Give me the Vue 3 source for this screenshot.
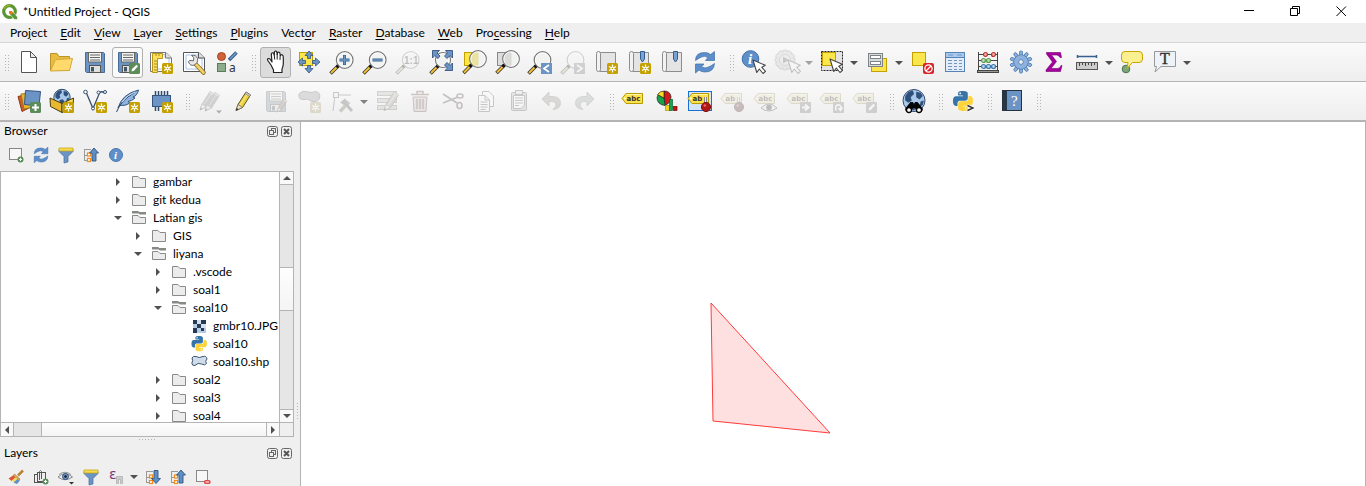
<script setup>
const star = (x = 14, y = 13) =>
  `<rect x="${x}" y="${y}" width="11" height="11" rx="1.5" fill="#c4a000"/><g transform="translate(${x + 5.5} ${y + 5.5})" stroke="#fff" stroke-width="1.3"><path d="M0-4V4M-3.5-2L3.5 2M-3.5 2L3.5-2"/><circle r="1.8" fill="#fff" stroke="none"/><circle r="0.8" fill="#c4a000" stroke="none"/></g>`

const stick = (x, y) =>
  `<path d="M${x} ${y}l-7.500 7.500" stroke="#333" stroke-width="3.600"/><path d="M${x - 1.5} ${y + 1.5}l-5.500 5.500" stroke="#f5c030" stroke-width="2"/><circle cx="${x}" cy="${y}" r="1.800" fill="#111"/>`

const lens = (x, y, r = 8.3) =>
  `<circle cx="${x}" cy="${y}" r="${r}" fill="#f0f2f0" fill-opacity=".85" stroke="#777" stroke-width="1.2"/><circle cx="${x}" cy="${y}" r="${r - 1.2}" fill="none" stroke="#fff" stroke-width="1" opacity=".8"/>`

const cursor = (x, y) =>
  `<path transform="translate(${x} ${y})" d="M0 0L3.800 12.500L6.300 9L10 13.500L12.500 11.300L8.800 7.300L12.300 5.300Z" fill="#fff" stroke="#444" stroke-width="1.1" stroke-linejoin="round"/>`

const floppy =
  '<path d="M3.500 2.500H21.500L22.500 3.500V22.500H4.500L3.500 21.500Z" fill="#6b94c4" stroke="#4a6c93"/><rect x="6.500" y="2.500" width="13" height="9.500" fill="#f3f3f0" stroke="#666"/><path d="M8 5h10M8 7.500h10M8 10h10" stroke="#666"/><rect x="7.500" y="15.500" width="11" height="7" fill="#dfe1df" stroke="#555"/><rect x="9" y="17" width="3" height="4.500" fill="#456"/>'

const mapSheet =
  '<path d="M5.500 2.500H22.500V21.500H7L4.500 19Z" fill="#e4e4e4" stroke="#8d8d8d"/><path d="M3.500 3.500Q3.500 1.500 5.500 1.500T7.500 3.500V19.500Q7.500 21.500 5.500 21.500T3.500 19.500Z" fill="#f2f2f2" stroke="#8d8d8d"/>'

const ribbon = (x) => `<path d="M${x} 1.500h4v7.500l-2 3-2-3Z" fill="#7ba2d2" stroke="#315d91"/>`

const tag = (label) =>
  `<path d="M1 9.500L5 4.500H21.500V14.500H5Z" fill="#fbe14b" stroke="#b89b00" stroke-linejoin="round"/><path d="M5.500 5.500h15" stroke="#fff6a8"/><circle cx="4" cy="9.500" r="1" fill="#fff"/><text x="5.500" y="12" font-family="DejaVu Sans, sans-serif" font-size="7" font-weight="700" fill="#333">${label}</text>`

const pin = '<path d="M18.500 8v8" stroke="#777" stroke-width="3"/><path d="M18.500 8v8" stroke="#eee" stroke-width="1.300"/><circle cx="19" cy="18" r="4.600" fill="#b01717" stroke="#7c1010"/><circle cx="17.800" cy="16.500" r="1.300" fill="#e66"/>'

const badge = (inner) => `<rect x="14" y="13" width="11" height="11" rx="1" fill="#777"/>${inner}`

const pencil = (x, y, c = '#f0d23c', line = '#5d5420') =>
  `<g transform="translate(${x} ${y})"><path d="M1 20L3 14L11 1.500L15.500 4.500L7.500 17Z" fill="${c}" stroke="${line}" stroke-linejoin="round"/><path d="M5 14.500L12.500 3.500" stroke="#fff" stroke-opacity=".5" stroke-width="1"/><path d="M11 1.500L15.500 4.500L14.500 6L10 3Z" fill="#ccc" stroke="#777" stroke-width=".6"/><path d="M1 20L3 14L7.500 17Z" fill="#eee0c0" stroke="#666" stroke-width=".7"/><path d="M1 20L1.700 17.500L3.500 18.700Z" fill="#222"/></g>`

const pythonBody =
  '<path fill="#3775a9" d="M14.25.18l.9.2.73.26.59.3.45.32.34.34.25.34.16.33.1.3.04.26.02.2-.01.13V8.5l-.05.63-.13.55-.21.46-.26.38-.3.31-.33.25-.35.19-.35.14-.33.1-.3.07-.26.04-.21.02H8.77l-.69.05-.59.14-.5.22-.41.27-.33.32-.27.35-.2.36-.15.37-.1.35-.07.32-.04.27-.02.21v3.06H3.17l-.21-.03-.28-.07-.32-.12-.35-.18-.36-.26-.36-.36-.35-.46-.32-.59-.28-.73-.21-.88-.14-1.05-.05-1.23.06-1.22.16-1.04.24-.87.32-.71.36-.57.4-.44.42-.33.42-.24.4-.16.36-.1.32-.05.24-.01h.16l.06.01h8.16v-.83H6.18l-.01-2.75-.02-.37.05-.34.11-.31.17-.28.25-.26.31-.23.38-.2.44-.18.51-.15.58-.12.64-.1.71-.06.77-.04.84-.02 1.27.05zm-6.3 1.98l-.23.33-.08.41.08.41.23.34.33.22.41.09.41-.09.33-.22.23-.34.08-.41-.08-.41-.23-.33-.33-.22-.41-.09-.41.09z"/><path fill="#ffd43b" d="M21.04 6.11l.28.06.32.12.35.18.36.27.36.35.35.47.32.59.28.73.21.88.14 1.04.05 1.23-.06 1.23-.16 1.04-.24.86-.32.71-.36.57-.4.45-.42.33-.42.24-.4.16-.36.09-.32.05-.24.02-.16-.01h-8.22v.82h5.84l.01 2.76.02.36-.05.34-.11.31-.17.29-.25.25-.31.24-.38.2-.44.17-.51.15-.58.13-.64.09-.71.07-.77.04-.84.01-1.27-.04-1.07-.14-.9-.2-.73-.25-.59-.3-.45-.33-.34-.34-.25-.34-.16-.33-.1-.3-.04-.25-.02-.2.01-.13v-5.34l.05-.64.13-.54.21-.46.26-.38.3-.32.33-.24.35-.2.35-.14.33-.1.3-.06.26-.04.21-.02.13-.01h5.84l.69-.05.59-.14.5-.21.41-.28.33-.32.27-.35.2-.36.15-.36.1-.35.07-.32.04-.28.02-.21V6.07h2.09l.14.01zm-6.47 14.25l-.23.33-.08.41.08.41.23.33.33.23.41.08.41-.08.33-.23.23-.33.08-.41-.08-.41-.23-.33-.33-.23-.41-.08-.41.08z"/>'

const teeth = (n, r, w, h) =>
  Array.from({ length: n }, (_, i) => `<rect x="${-w / 2}" y="${-r}" width="${w}" height="${h}" rx="1" transform="rotate(${(i * 360) / n})"/>`).join('')

const refreshPaths =
  '<path d="M3.500 10.500Q3.500 2.500 12.500 2.500Q16.500 2.500 18.500 4.500L22.500 1.500V10.500H13.500L16 7.500Q12.500 5.500 9.500 7Q7 8 3.500 10.500Z" fill="#5b8ecb" stroke="#3f6ea8" stroke-width=".7"/><path d="M22.500 13.500Q22 22 13 22Q9 22 7 20L3.500 23V14H12L9.500 16.800Q13 19 16.500 17Q19 16 22.500 13.500Z" fill="#5b8ecb" stroke="#3f6ea8" stroke-width=".7"/>'

const globe = (x, y, r) =>
  `<circle cx="${x}" cy="${y}" r="${r}" fill="#a9c8ea" stroke="#2f4a6b"/><path transform="translate(${x} ${y}) scale(${r / 10})" d="M-8-4L-5-8L-1-9L0-6L-3-3L-2 0L-5 2L-8 0ZM2-8L6-7L8-4L5-1L2-3ZM-3 3L1 2L3 5L0 9L-3 7ZM6 1L9 0L8 4L5 6Z" fill="#2e507b"/>`

const icons = {
  new: '<path d="M5.500 1.500H14.500L20.500 7.500V22.500H5.500Z" fill="#fff" stroke="#555"/><path d="M14.500 1.500V7.500H20.500Z" fill="#eee" stroke="#555" stroke-linejoin="round"/>',
  open: '<path d="M1.500 20.500V3.500H8L10 6.500H20.500V20.500Z" fill="#e8bd3d" stroke="#b9942c"/><path d="M1.500 21L6 10.500Q6.500 9.500 8 9.500L23.500 8.500L20.500 20.500Z" fill="#ffd96b" stroke="#d3a93a" stroke-linejoin="round"/>',
  save: floppy,
  saveAs: floppy + '<rect x="14" y="13" width="11" height="11" rx="1.500" fill="#5b8c5a"/><path d="M16.500 21.500L17 19L21.500 14.800L23 16.300L19 20.800Z" fill="#fff"/>',
  layout: '<path d="M2.500 2.500H18L23.500 8V21.500H2.500Z" fill="#fff" stroke="#777"/><path d="M5 4.500h12v3h4V19H5Z" fill="none" stroke="#aac4ea"/><path d="M17.500 2.500V8H23.500" fill="#ddd" stroke="#777"/><path d="M4.500 3.500H14.500V8.500H9.500V22.500H4.500Z" fill="#fbdf5b" stroke="#b8961b"/><path d="M6 11h3M6 14h3M6 17h3M6 20h3M8 4v2M11 4v2" stroke="#a98a1c"/>' + star(),
  manager: '<path d="M2.500 2.500H18L23.500 8V21.500H2.500Z" fill="#fff" stroke="#555"/><path d="M5 5h12v3h4V19H5Z" fill="none" stroke="#aac4ea"/><path d="M17.500 2.500V8H23.500" fill="#ddd" stroke="#555"/><path d="M14 13.500L22.500 22.500" stroke="#88702b" stroke-width="4.500" stroke-linecap="round"/><path d="M15 14.500L22.500 22.500" stroke="#f3cf68" stroke-width="2.800" stroke-linecap="round"/><path d="M9 10.500L12.500 10.800L12.800 7.500L10.500 5.500Q15 4.500 16.500 8.500Q17 11 16 12.500L13.500 15Q9 16.500 7.500 11.800Q8 10.500 9 10.500Z" fill="#e8e8e8" stroke="#666"/>',
  style: '<circle cx="7.500" cy="6.500" r="4" fill="#d0613a" stroke="#a8431f"/><path d="M15 10L22.500 2.500" stroke="#38608f" stroke-width="3.500"/><path d="M16 9L22.500 2.500" stroke="#739bc9" stroke-width="1.500"/><rect x="3.500" y="13.500" width="8" height="8" fill="#8dac8c" stroke="#5a7d59"/><text x="15" y="21.500" font-family="Noto Sans, sans-serif" font-size="12" fill="#333">a</text>',
  hand: '<path d="M8 15L4.800 10.500Q4 8.800 5.500 8.500Q7 8.300 8 10.500L9 12L8.300 4.500Q8.500 2.500 10 2.800Q11 3 11.200 5L11.500 1.800Q12.500.3 13.800 1.700L14.200 4.500Q14.300 2 15.800 2Q17.200 2.300 17.200 5L17.500 5.500Q18.300 4.200 19.500 5Q20.300 5.500 20.300 8V14Q20 17 19 19V22.500H10.500V20Z" fill="#fff" stroke="#222" stroke-width="1.200" stroke-linejoin="round"/><path d="M11.200 4.500L11.700 9.500M14.200 4V9.500M17.200 5L17 10" stroke="#222"/>',
  panSel: '<rect x="3.500" y="2.500" width="13" height="13" fill="#fbe64b" stroke="#c4a000"/><path d="M13 1L17 5.500H14.500V8.500H11.500V5.500H9ZM13 23L17 18.500H14.500V15.500H11.500V18.500H9ZM2 12L6.500 8V10.500H9.500V13.500H6.500V16ZM24 12L19.500 8V10.500H16.500V13.500H19.500V16Z" fill="#6b94c4" stroke="#345580" stroke-width=".8"/>',
  zoomIn: stick(9, 16) + lens(15.7, 10) + '<path d="M15.500 5V15M10.500 10H20.500" stroke="#38608f" stroke-width="3"/><path d="M15.500 5.500V14.500M11 10H20" stroke="#6b94c4" stroke-width="1.500"/>',
  zoomOut: stick(9, 16) + lens(15.7, 10) + '<path d="M10.500 10H20.500" stroke="#38608f" stroke-width="3"/><path d="M11 10H20" stroke="#6b94c4" stroke-width="1.500"/>',
  zoomNative: stick(9, 16) + lens(15.7, 10) + '<text x="9" y="13.500" font-family="Liberation Sans, sans-serif" font-size="10" font-weight="700" fill="#333">1:1</text>',
  zoomFull: stick(10, 16) + lens(15, 10, 7.5) + '<path d="M4.500.500H11.500L9 3L12 6L10 8.500L6.800 5.500L4.500 8ZM24.500.500V8L22 5.500L19 8.500L16.500 6L19.500 3L17.500.500ZM24.500 20.500H17L19.500 18L16.500 15L19 12.500L22 15.500L24.500 13Z" fill="#6b94c4" stroke="#345580" stroke-width=".9"/>',
  zoomSel: '<rect x="3.500" y="2.500" width="13" height="13" fill="#fbe64b" stroke="#c4a000"/>' + stick(10, 15.5) + lens(17, 9) + '<path d="M12 4Q15 1.500 17.500 3V15.500H12Q9 9 12 4Z" fill="#e5dc8b" opacity=".7"/>',
  zoomLayer: '<rect x="3.500" y="2.500" width="13" height="13" fill="#ddd" stroke="#888"/>' + stick(10, 15.5) + lens(17, 9) + '<path d="M12 4Q15 1.500 17.500 3V15.500H12Q9 9 12 4Z" fill="#d3d3ce" opacity=".7"/>',
  zoomLast: stick(9, 16) + lens(15.5, 10) + '<rect x="14" y="13" width="11" height="11" fill="#6b94c4"/><path d="M22 15L17 18.500L22 22" fill="none" stroke="#fff" stroke-width="1.800"/>',
  zoomNext: stick(9, 16) + lens(15.5, 10) + '<rect x="14" y="13" width="11" height="11" fill="#777"/><path d="M17 15L22 18.500L17 22" fill="none" stroke="#fff" stroke-width="1.800"/>',
  mapView: mapSheet + star(),
  newBookmark: mapSheet + ribbon(14.5) + star(),
  bookmark: mapSheet + ribbon(14.5),
  refresh: refreshPaths,
  identify: '<circle cx="9.500" cy="9" r="8.300" fill="#5f8fc9" stroke="#3f6ea8"/><text x="7" y="14" font-family="Liberation Serif, serif" font-size="15" font-weight="700" font-style="italic" fill="#fff">i</text>' + cursor(12, 10),
  action: '<g transform="translate(11 10)" fill="#ccc" stroke="#777" stroke-width=".8">' + teeth(12, 10, 4, 5) + '<circle r="8" stroke="none"/><circle r="5.500" fill="#ddd"/></g><path d="M9 6.500L15 10L9 13.500Z" fill="#555"/>' + cursor(14, 10),
  select: '<rect x="2.500" y="1.500" width="21" height="19" fill="#e4e4e4" stroke="#222" stroke-dasharray="2 1"/><rect x="3.500" y="2.500" width="13" height="13" fill="#fbe64b" stroke="#c4a000"/>' + cursor(11, 9),
  selectForm: '<rect x="7.500" y="8.500" width="15" height="13" fill="#fbe64b" stroke="#c4a000"/><rect x="4.500" y="3.500" width="14" height="13" fill="#d8dcdf" stroke="#7d8488"/><rect x="6.500" y="5.500" width="10" height="3" fill="#fff" stroke="#7d8488"/><rect x="6.500" y="11.500" width="10" height="3" fill="#fff" stroke="#7d8488"/>',
  deselect: '<rect x="3.500" y="2.500" width="13" height="13" fill="#fbe64b" stroke="#c4a000"/><rect x="14" y="13" width="11" height="11" rx="2" fill="#d8232a"/><circle cx="19.500" cy="18.500" r="3.600" fill="none" stroke="#fff" stroke-width="1.300"/><path d="M17 21L22 16" stroke="#fff" stroke-width="1.300"/>',
  table: '<rect x="3.500" y="2.500" width="19" height="19" fill="#e3ecf7" stroke="#5583b8"/><rect x="4" y="3" width="18" height="4" fill="#a9c9ef"/><path d="M3.500 7.500H22.500" stroke="#5583b8"/><path d="M6 5h5M15 5h5M6 10.500h4M12 10.500h3M17 10.500h3M6 13.500h4M12 13.500h3M17 13.500h3M6 16.500h4M12 16.500h3M17 16.500h3M6 19.500h4M12 19.500h3M17 19.500h3" stroke="#7196c2"/>',
  abacus: '<path d="M3.500 2V21M22.500 2V21M3.500 4.500H22.500M3.500 10.500H22.500M3.500 16.500H22.500" stroke="#444"/><rect x="2.500" y="20.500" width="21" height="2" fill="#999" stroke="#444"/><g stroke-width="1.200"><g fill="#f3aaa4" stroke="#c03028"><circle cx="10.500" cy="4.500" r="2"/><circle cx="18.500" cy="4.500" r="2"/></g><g fill="#bfe0b6" stroke="#5a9a50"><circle cx="8.500" cy="10.500" r="2"/><circle cx="13.500" cy="10.500" r="2"/></g><g fill="#b5d5f0" stroke="#3f79ac"><circle cx="8.500" cy="16.500" r="2"/><circle cx="13.500" cy="16.500" r="2"/><circle cx="18.500" cy="16.500" r="2"/></g></g>',
  gear: '<g transform="translate(13 12)" fill="#8db1de" stroke="#4a78ae" stroke-width=".8">' + teeth(10, 11, 3, 6) + '<circle r="7.200"/><circle r="6.500" stroke="none"/><circle r="2.300" fill="#f5f5f5"/></g>',
  sigma: '<path d="M5.500 2.500H19.500L20.500 7.500H19Q18 5 15.500 5H10.500L15.500 11.500L10 18.500H16.500Q19 18.500 20 15.500H21L19.500 21.500H5V20L11.500 12L5.500 4Z" fill="#a5009f" stroke="#76006f" stroke-width=".6"/>',
  ruler: '<path d="M3 6.500H23M3.500 5V8M22.500 5V8" stroke="#38608f" stroke-width="1.500"/><rect x="2.500" y="12.500" width="21" height="7" fill="#ccc" stroke="#555"/><path d="M5.500 13v3M8.500 13v2M11.500 13v3M14.500 13v2M17.500 13v3M20.500 13v2" stroke="#444"/>',
  tip: '<circle cx="7" cy="19" r="3.800" fill="#7ca77b" stroke="#4a7349"/><path d="M6 1.500H20Q23.500 1.500 23.500 5V9Q23.500 12.500 20 12.500H13.500L8 18.500L9 12.500H6Q2.500 12.500 2.500 9V5Q2.500 1.500 6 1.500Z" fill="#fbf08f" stroke="#c9a500" stroke-linejoin="round"/>',
  text: '<path d="M2.500 1.500H23.500V16.500H9L3 22L4.500 16.500H2.500Z" fill="#edf3f8" stroke="#999" stroke-linejoin="round"/><text x="8" y="14" font-family="Liberation Serif, serif" font-size="16" fill="#333" stroke="#333" stroke-width=".4">T</text>',

  addLayer: '<path d="M2 7.500L13 5L15 18L6 22.500Z" fill="#cd5b2b" stroke="#8d3a17"/><path d="M5 5L16 4L17 18L8 20Z" fill="#e8b92f" stroke="#a37b12"/><path d="M9.500 1.500L24.500 2.500L23 17L8.500 15.500Z" fill="#6b94c4" stroke="#345580"/><rect x="14" y="13" width="11" height="11" rx="1.500" fill="#5b8c5a"/><path d="M19.500 15V22M16 18.500H23" stroke="#fff" stroke-width="2"/>',
  geopackage: globe(13, 8.5, 8.2) + '<path d="M1 9L13 14.500V23.500L1.500 17.500Z" fill="#e8b92f" stroke="#493a0e" stroke-linejoin="round"/><path d="M13 14.500L24.500 9L24 18L13 23.500Z" fill="#f7dc55" stroke="#493a0e" stroke-linejoin="round"/>' + star(),
  shape: '<path d="M4 3L11 19.500L17.500 4Q20 1.500 22 4" fill="none" stroke="#38506e" stroke-width="1.300"/><g fill="#fff" stroke="#38506e"><circle cx="3.500" cy="3" r="1.800"/><circle cx="11" cy="19.500" r="1.500"/><circle cx="16.500" cy="3.500" r="1.500"/><circle cx="23" cy="3" r="1.500"/></g>' + star(),
  feather: '<path d="M3 19Q7 5 23.500 1Q22 7 18 8L20 9Q17 12 13 12.500L15 14Q11 17 5 16.500Z" fill="#8fb3dc" stroke="#345580"/><path d="M1.500 23Q6 11 19 4" fill="none" stroke="#2d4768"/><path d="M7 13Q12 6 20 3" stroke="#c9def4" fill="none"/>' + star(),
  chip: '<path d="M7.500 2V7M10.500 2V7M13.500 2V7M16.500 2V7M19.500 2V7M7.500 17V22M10.500 17V22" stroke="#2f4a6b" stroke-width="1.500"/><rect x="4.500" y="6.500" width="18" height="11" fill="#6b94c4" stroke="#345580"/>' + star(),
  pencils: pencil(2, 1, '#777', '#777') + pencil(7, 2, '#777', '#777') + '<path d="M19 21.500H25L22 24.500Z" fill="#000"/>',
  pencil: pencil(5, 1.5),
  saveEdits: floppy + '<g transform="translate(13 9) scale(.7)">' + pencil(0, 0, '#a55') + '</g>',
  addPolygon: '<path d="M3 5Q6 1 12 3Q16 4 20 2.500Q25 4 23.500 9Q22 14 15 12Q12 9 8 10.500Q2 11 3 5Z" fill="#999" stroke="#555"/>' + star(),
  vertex: '<path d="M6 6H22M6 6L4 22" stroke="#555"/><rect x="4.500" y="3.500" width="5" height="5" fill="#eee" stroke="#555"/><path d="M11 22.500L20 13" stroke="#77702b" stroke-width="3.500"/><path d="M15 13L23 22" stroke="#555" stroke-width="3"/><path d="M11 13.500L16 9.500L19 13L15 16Z" fill="#555"/>',
  multiedit: '<g fill="#c8bd8c" stroke="#777"><rect x="3.500" y="2.500" width="19" height="4"/><rect x="3.500" y="9.500" width="19" height="4"/><rect x="3.500" y="16.500" width="19" height="4"/></g>' + pencil(9, 1.5, '#b98'),
  delete: '<path d="M6 8H20L19 22.500H7Z" fill="#e6b7b7" stroke="#a33"/><path d="M4 5.500H22M10 5V2.500H16V5M10 10V20M13 10V20M16 10V20" fill="none" stroke="#a33" stroke-width="1.500"/>',
  cut: '<path d="M3 5L17 14M3 14L18 8" stroke="#444" stroke-width="1.800"/><ellipse cx="20" cy="7" rx="3" ry="2" fill="none" stroke="#733" stroke-width="1.600"/><ellipse cx="19.500" cy="16.500" rx="2.500" ry="3" fill="none" stroke="#733" stroke-width="1.600"/>',
  copy: '<path d="M9.500 2.500H16L20.500 7V17.500H9.500Z" fill="#fff" stroke="#555"/><path d="M5.500 6.500H12L16.500 11V22.500H5.500Z" fill="#fff" stroke="#555"/><path d="M12 6.500V11H16.500M7.500 13h7M7.500 15.500h7M7.500 18h7M7.500 20.500h5" fill="none" stroke="#555"/>',
  paste: '<rect x="5.500" y="3.500" width="15" height="18" rx="1" fill="#bbb" stroke="#555"/><rect x="9.500" y="1.500" width="7" height="4" fill="#ddd" stroke="#555"/><path d="M7.500 6.500H18.500V16L15 19.500H7.500Z" fill="#fff" stroke="#555"/><path d="M9 9h8M9 11.500h8M9 14h8M9 16.500h4" stroke="#555"/>',
  undo: '<path d="M10 3V7.500H14Q21.500 8 21.500 14.500Q21 20 14 20.500Q17.500 18 17 15Q16.500 12.500 13 12.500H10V17L3 10Z" fill="#a68f6c" stroke="#8f7a58"/>',
  redo: '<path d="M15 3V7.500H11Q3.500 8 3.500 14.500Q4 20 11 20.500Q7.500 18 8 15Q8.500 12.500 12 12.500H15V17L22 10Z" fill="#93a596" stroke="#74877a"/>',
  label: tag('abc'),
  diagram: '<path d="M10 9V2Q16 2 17 7.500Q17 14 11 16.500Z" fill="#d01c1c" stroke="#222" stroke-width=".7"/><path d="M10 9L11 16.500Q3 15.500 3 8.500L4 6Z" fill="#16a34a" stroke="#222" stroke-width=".7"/><path d="M10 9L3.500 5.500Q6 2 10 2Z" fill="#f4e01e" stroke="#222" stroke-width=".7"/><rect x="11.500" y="16.500" width="4" height="5" fill="#f6d51f" stroke="#b99500" stroke-width=".7"/><rect x="15.500" y="10.500" width="3" height="11" fill="#18a552" stroke="#0b6a31" stroke-width=".7"/><rect x="19.500" y="17.500" width="3.500" height="4" fill="#c41414" stroke="#700" stroke-width=".7"/>',
  labelPin: '<rect x="1.500" y="2.500" width="23" height="19" fill="#d5e4f5" stroke="#1a6fd6"/>' + tag('ab') + pin,
  labelPinOff: tag('ab') + pin,
  labelShow: tag('abc') + '<path d="M8 19Q16 11 24 19Q16 25 8 19Z" fill="#eee" stroke="#444"/><circle cx="16" cy="18.500" r="2.800" fill="#333"/>',
  labelMove: tag('abc') + badge('<path d="M16 18.500H21M19 15.500L22.500 18.500L19 21.500" fill="none" stroke="#fff" stroke-width="2"/>'),
  labelRotate: tag('abc') + badge('<path d="M17 21.500Q15.500 16 19.500 15.800Q23 16.500 21.500 20M19.500 19L21.500 21.500L23.500 18.500" fill="none" stroke="#fff" stroke-width="1.500"/>'),
  labelEdit: tag('abc') + badge('<path d="M16.500 21.500L17 19L21.500 14.800L23 16.300L19 20.800Z" fill="#fff"/>'),
  search: globe(13, 11.5, 11) + '<path d="M7 16L9.500 13H12L13 16L14 13H16.500L19 16L22 20Q21 24 17.500 23Q14.500 22 14 19H12Q11.500 22 8.500 23Q5 24 4 20Z" fill="#050505"/><circle cx="8" cy="21" r="2.500" fill="#fff" stroke="#000" stroke-width="1.300"/><circle cx="18" cy="21" r="2.500" fill="#fff" stroke="#000" stroke-width="1.300"/>',
  console: '<g transform="translate(3 2) scale(.83)">' + pythonBody + '</g><path d="M17.500 16.500L23 19L17.500 21.500" fill="none" stroke="#fff" stroke-width="3"/><path d="M17.500 16.500L23 19L17.500 21.500" fill="none" stroke="#333" stroke-width="1.400"/>',
  help: '<rect x="3.500" y="1.500" width="19" height="20" fill="#6b94c4" stroke="#26333f"/><rect x="4" y="2" width="4" height="19" fill="#26374a"/><text x="12" y="17" font-family="Liberation Serif, serif" font-size="15" fill="#fff">?</text>'
}

const funnel = '<path d="M1 2.500H15V4.500L10 9.500V15L6 16V9.500L1 4.500Z" fill="#6b94c4" stroke="#456f9f" stroke-width=".7"/><path d="M1 1H15V4H1Z" fill="#f4dc54" stroke="#c4a000" stroke-width=".7"/>'
const treeBars = '<path d="M1.500 2V14M1 2.500H8M1 8.500H5M1 13.500H5" stroke="#999" fill="none"/><rect x="4.500" y="6" width="3" height="3" fill="#fff" stroke="#ef8b1d" stroke-width="1.200"/><rect x="4.500" y="11.500" width="3" height="3" fill="#fff" stroke="#ef8b1d" stroke-width="1.200"/>'

const small = {
  add: '<rect x="1.500" y="1.500" width="12" height="11" fill="#f7f7f7" stroke="#888"/><circle cx="12.500" cy="12.500" r="3" fill="#5b8c5a"/><path d="M12.500 11V14M11 12.500H14" stroke="#fff"/>',
  refresh: '<g transform="translate(-1.300 -.8) scale(.72)">' + refreshPaths + '</g>',
  filter: funnel,
  collapse: treeBars + '<path d="M11 1L15.500 6H13V14H9V6H6.500Z" fill="#5f8ec4" stroke="#2f5785" stroke-width=".9"/>',
  expand: treeBars + '<path d="M11 14.500L15.500 9.500H13V1.500H9V9.500H6.500Z" fill="#5f8ec4" stroke="#2f5785" stroke-width=".9"/>',
  info: '<circle cx="8" cy="8" r="6.500" fill="#5f8fc9" stroke="#4a78ae"/><text x="6" y="12" font-family="Liberation Serif, serif" font-size="11" font-weight="700" font-style="italic" fill="#fff">i</text>',
  brush: '<path d="M15 1.500L10 6.500" stroke="#b98535" stroke-width="2.500"/><path d="M6.500 5L12 10L11 12L5 7Z" fill="#d3a757" stroke="#a37a35" stroke-width=".6"/><path d="M5 6.500L7.500 8.500L3.500 12L.5 9.500Z" fill="#e0553a"/><path d="M7.500 8.500L9.500 10L6 13L3.500 12Z" fill="#f4dc54"/><path d="M9.500 10L11.500 12L9 15L5.500 13.500Z" fill="#5f8fc9"/>',
  group: '<rect x="1.500" y="5.500" width="8" height="8" fill="#eee" stroke="#555"/><rect x="4.500" y="3.500" width="8" height="9" fill="#eee" stroke="#555"/><path d="M6.500 11V2.500Q7.500.5 8.500 2.500V10" fill="none" stroke="#38608f"/><circle cx="12.500" cy="12.500" r="3" fill="#5b8c5a"/><path d="M12.500 11V14M11 12.500H14" stroke="#fff"/>',
  eye: '<path d="M0 8Q7 1.500 14.500 8Q7 13.500 0 8Z" fill="#eee" stroke="#888"/><path d="M1 5.500Q7 1 13 5.500" fill="none" stroke="#999"/><circle cx="7.500" cy="7.500" r="3" fill="#6b94c4" stroke="#345580"/><circle cx="7.500" cy="7.500" r="1.200" fill="#111"/><path d="M11 13H16L13.500 15.500Z" fill="#333"/>',
  expression: '<text x="1" y="10" font-family="DejaVu Sans, sans-serif" font-size="14" fill="#7b3a78">ε</text><path d="M8.500 7.500H14.500V14.500H12.500V10.500H10.500V14.500H8.500Z" fill="#ccc" stroke="#aaa" stroke-width=".7"/>',
  remove: '<rect x="1.500" y="1.500" width="11" height="11" fill="#f7f7f7" stroke="#888"/><rect x="9" y="11" width="6.500" height="4" rx="1.500" fill="#e04848"/><path d="M10.500 13H14" stroke="#fff"/>',
  folder: '<path d="M1.500 2.500H7L9 4.500H14.500V13.500H1.500Z" fill="#ececec" stroke="#8a8a8a" stroke-linejoin="round"/>',
  folderOpen: '<path d="M1 1H7L8.500 2H15V4.500H9L7.500 3.500H1Z" fill="#868a84"/><path d="M1.500 5.500H7L9 7.500H14.500V13.500H1.500Z" fill="#ececec" stroke="#8a8a8a" stroke-linejoin="round"/>',
  raster: '<rect x="2" y="2" width="13" height="13" fill="#b5cbe6"/><path d="M2 2h4v4H2ZM10 2h5v4h-5ZM6 6h4v4H6ZM2 10h4v5H2Z" fill="#243a55"/><path d="M10 10h3v3h-3Z" fill="#243a55"/><path d="M6 2h4v4H6ZM10 6h5v4h-5Z" fill="#d5e1ef"/>',
  python: '<g transform="translate(.5 0) scale(.64)">' + pythonBody + '</g>',
  polygon: '<path d="M1 4Q2 1.500 5 2.500Q8 4.500 12 2.500Q15.500 1.500 16 5Q13.500 7 15.500 9.500Q14 12 10.500 10Q7 8 4 11.500Q1 12 .8 9Q2.500 7 1 4Z" fill="#cfdcec" stroke="#3f536e"/>'
}

const menus = [
  ['Pro', 'j', 'ect'], ['', 'E', 'dit'], ['', 'V', 'iew'], ['', 'L', 'ayer'], ['', 'S', 'ettings'], ['', 'P', 'lugins'],
  ['Vect', 'o', 'r'], ['', 'R', 'aster'], ['', 'D', 'atabase'], ['', 'W', 'eb'], ['Pro', 'c', 'essing'], ['', 'H', 'elp']
]

const b = (icon, title, opts = {}) => ({ icon, title, ...opts })
const off = { disabled: true }
const drop = { drop: true }

const toolbars = [
  [
    [b('new', 'New Project'), b('open', 'Open Project'), b('save', 'Save Project'), b('saveAs', 'Save Project As', { state: 'raised' }), b('layout', 'New Print Layout'), b('manager', 'Layout Manager'), b('style', 'Style Manager')],
    [b('hand', 'Pan Map', { state: 'pressed' }), b('panSel', 'Pan Map to Selection'), b('zoomIn', 'Zoom In'), b('zoomOut', 'Zoom Out'), b('zoomNative', 'Zoom to Native Resolution', off), b('zoomFull', 'Zoom Full'), b('zoomSel', 'Zoom to Selection'), b('zoomLayer', 'Zoom to Layer'), b('zoomLast', 'Zoom Last'), b('zoomNext', 'Zoom Next', off), b('mapView', 'New Map View'), b('newBookmark', 'New Bookmark'), b('bookmark', 'Show Bookmarks'), b('refresh', 'Refresh')],
    [b('identify', 'Identify Features'), b('action', 'Run Feature Action', { ...off, ...drop }), b('select', 'Select Features', drop), b('selectForm', 'Select by Value', drop), b('deselect', 'Deselect Features'), b('table', 'Open Attribute Table'), b('abacus', 'Field Calculator'), b('gear', 'Toolbox'), b('sigma', 'Statistical Summary'), b('ruler', 'Measure Line', drop), b('tip', 'Map Tips'), b('text', 'Text Annotation', drop)]
  ],
  [
    [b('addLayer', 'Data Source Manager'), b('geopackage', 'New GeoPackage Layer'), b('shape', 'New Shapefile Layer'), b('feather', 'New SpatiaLite Layer'), b('chip', 'New Virtual Layer')],
    [b('pencils', 'Current Edits', off), b('pencil', 'Toggle Editing'), b('saveEdits', 'Save Layer Edits', off), b('addPolygon', 'Add Polygon Feature', off), b('vertex', 'Vertex Tool', { ...off, ...drop, darkDrop: true }), b('multiedit', 'Modify Attributes', off), b('delete', 'Delete Selected', off), b('cut', 'Cut Features', off), b('copy', 'Copy Features', off), b('paste', 'Paste Features', off), b('undo', 'Undo', off), b('redo', 'Redo', off)],
    [b('label', 'Layer Labeling'), b('diagram', 'Layer Diagram'), b('labelPin', 'Highlight Pinned Labels'), b('labelPinOff', 'Pin Labels', off), b('labelShow', 'Show Labels', off), b('labelMove', 'Move Label', off), b('labelRotate', 'Rotate Label', off), b('labelEdit', 'Change Label', off)],
    [b('search', 'MetaSearch')],
    [b('console', 'Python Console')],
    [b('help', 'Help Contents')],
    []
  ]
]

const browserTools = [b('add', 'Add Selected Layers'), b('refresh', 'Refresh'), b('filter', 'Filter Browser'), b('collapse', 'Collapse All'), b('info', 'Properties')]
const layerTools = [b('brush', 'Layer Styling'), b('group', 'Add Group'), b('eye', 'Map Themes'), b('filter', 'Filter Legend'), b('expression', 'Filter by Expression', drop), b('expand', 'Expand All'), b('collapse', 'Collapse All'), b('remove', 'Remove Layer')]

const tree = [
  { name: 'gambar', level: 0, icon: 'folder', arrow: 'closed' },
  { name: 'git kedua', level: 0, icon: 'folder', arrow: 'closed' },
  { name: 'Latian gis', level: 0, icon: 'folderOpen', arrow: 'opened' },
  { name: 'GIS', level: 1, icon: 'folder', arrow: 'closed' },
  { name: 'liyana', level: 1, icon: 'folderOpen', arrow: 'opened' },
  { name: '.vscode', level: 2, icon: 'folder', arrow: 'closed' },
  { name: 'soal1', level: 2, icon: 'folder', arrow: 'closed' },
  { name: 'soal10', level: 2, icon: 'folderOpen', arrow: 'opened' },
  { name: 'gmbr10.JPG', level: 3, icon: 'raster' },
  { name: 'soal10', level: 3, icon: 'python' },
  { name: 'soal10.shp', level: 3, icon: 'polygon' },
  { name: 'soal2', level: 2, icon: 'folder', arrow: 'closed' },
  { name: 'soal3', level: 2, icon: 'folder', arrow: 'closed' },
  { name: 'soal4', level: 2, icon: 'folder', arrow: 'closed' }
]

const dockControls =
  '<rect x=".5" y=".5" width="10" height="10" rx="2" fill="none" stroke="#666"/>'
const floatGlyph = dockControls + '<rect x="4.500" y="2.500" width="4" height="4" fill="none" stroke="#666"/><rect x="2.500" y="4.500" width="4" height="4" fill="#efefef" stroke="#666"/>'
const closeGlyph = dockControls + '<path d="M3 3L8 8M8 3L3 8" stroke="#555" stroke-width="2"/>'
</script>

<template>
  <div class="window">
    <header class="titlebar">
      <svg class="logo" viewBox="0 0 16 16" aria-hidden="true">
        <circle cx="7.500" cy="7.500" r="5.800" fill="none" stroke="#589632" stroke-width="3.200" />
        <path d="M2 5Q4 1 8.500 1.500" fill="none" stroke="#93b023" stroke-width="1.500" />
        <path d="M8 8H11L15.500 13V15.500H12.500L8 10.500Z" fill="#589632" stroke="#fff" stroke-width=".6" />
        <path d="M7 7H10L11 9L9 10.500L7 9.500Z" fill="#ee7913" />
      </svg>
      <h1>*Untitled Project - QGIS</h1>
      <div class="controls">
        <button aria-label="Minimize"><svg viewBox="0 0 11 11"><path d="M0 4.500H10" stroke="#000" /></svg></button>
        <button aria-label="Restore"><svg viewBox="0 0 11 11"><path d="M.5 2.500H7.500V9.500H.5ZM2.500 2.500V.5H9.500V7.500H7.500" fill="none" stroke="#000" /></svg></button>
        <button aria-label="Close"><svg viewBox="0 0 11 11"><path d="M.5 .5L10 10M10 .5L.5 10" stroke="#000" /></svg></button>
      </div>
    </header>

    <nav class="menubar">
      <button v-for="m in menus" :key="m.join('')">{{ m[0] }}<u>{{ m[1] }}</u>{{ m[2] }}</button>
    </nav>

    <div v-for="(bar, i) in toolbars" :key="i" class="toolbar" role="toolbar">
      <div v-for="(group, g) in bar" :key="g" class="tool-group">
        <span class="grip"></span>
        <button
          v-for="t in group"
          :key="t.icon"
          class="tool"
          :class="[t.state, { drop: t.drop, 'dark-drop': t.darkDrop }]"
          :disabled="t.disabled"
          :aria-label="t.title"
        >
          <svg viewBox="0 0 25 25" v-html="icons[t.icon]"></svg>
          <i v-if="t.drop" class="caret"></i>
        </button>
      </div>
    </div>

    <main class="workspace">
      <aside class="docks">
        <section class="dock browser">
          <div class="dock-title">
            <h2>Browser</h2>
            <button aria-label="Float Browser"><svg viewBox="0 0 11 11" v-html="floatGlyph"></svg></button>
            <button aria-label="Close Browser"><svg viewBox="0 0 11 11" v-html="closeGlyph"></svg></button>
          </div>
          <div class="dock-tools">
            <button v-for="t in browserTools" :key="t.icon" :aria-label="t.title">
              <svg viewBox="0 0 16 16" v-html="small[t.icon]"></svg>
            </button>
          </div>
          <div class="tree-frame">
            <ul class="tree" role="tree">
              <li v-for="(n, k) in tree" :key="k" role="treeitem" :class="'level-' + n.level">
                <i class="arrow" :class="n.arrow"></i>
                <svg viewBox="0 0 16 16" v-html="small[n.icon]"></svg>
                <span>{{ n.name }}</span>
              </li>
            </ul>
            <div class="vscroll">
              <button aria-label="Scroll up"><i class="up"></i></button>
              <span class="groove before"></span>
              <span class="thumb"></span>
              <span class="groove after"></span>
              <button aria-label="Scroll down"><i class="down"></i></button>
            </div>
            <div class="hscroll">
              <button aria-label="Scroll left"><i class="left"></i></button>
              <span class="groove"></span>
              <span class="thumb"></span>
              <button aria-label="Scroll right"><i class="right"></i></button>
            </div>
            <div class="corner"></div>
          </div>
        </section>
        <div class="splitter"></div>
        <section class="dock layers">
          <div class="dock-title">
            <h2>Layers</h2>
            <button aria-label="Float Layers"><svg viewBox="0 0 11 11" v-html="floatGlyph"></svg></button>
            <button aria-label="Close Layers"><svg viewBox="0 0 11 11" v-html="closeGlyph"></svg></button>
          </div>
          <div class="dock-tools">
            <button v-for="t in layerTools" :key="t.icon" :aria-label="t.title">
              <svg viewBox="0 0 16 16" v-html="small[t.icon]"></svg>
              <i v-if="t.drop" class="caret"></i>
            </button>
          </div>
        </section>
      </aside>
      <div class="side-splitter"><span></span></div>
      <section class="canvas" aria-label="Map canvas">
        <svg viewBox="0 0 1064 364">
          <path d="M410 181L412 299L529 311Z" fill="#ffe0e0" stroke="#ff3b3b" />
        </svg>
      </section>
    </main>
  </div>
</template>

<style>
body {
  margin: 0;
  background: #efefef;
}
</style>

<style scoped>
.window {
  display: flex;
  flex-direction: column;
  height: 100vh;
  overflow: hidden;
  background: #efefef;
  color: #000;
  font-family: Lato, "Open Sans", sans-serif;
  font-size: 12px;
  line-height: 18px;
}
button {
  margin: 0;
  padding: 0;
  border: 0;
  background: none;
  color: inherit;
  font: inherit;
}
svg {
  display: block;
  flex: none;
  overflow: visible;
}
h1, h2 {
  margin: 0;
  font-size: 12px;
  font-weight: 400;
}
.titlebar {
  display: flex;
  align-items: center;
  flex: none;
  height: 23px;
  padding-left: 2px;
  background: #fff;
}
.logo {
  width: 16px;
  height: 16px;
  margin-right: 5px;
}
.controls {
  display: flex;
  margin-left: auto;
  padding-right: 2px;
}
.controls button {
  display: flex;
  align-items: center;
  justify-content: center;
  width: 46px;
  height: 21px;
}
.controls svg {
  width: 11px;
  height: 11px;
}
.menubar {
  display: flex;
  flex: none;
  gap: 13px;
  height: 19px;
  padding-left: 10px;
  border-bottom: 1px solid #d5d5d5;
}
.menubar u {
  text-underline-offset: 2px;
}
.toolbar {
  display: flex;
  flex: none;
  height: 38px;
  border-bottom: 1px solid #b4b4b4;
  background: linear-gradient(#fafafa, #eeeeee);
}
.toolbar + .toolbar {
  border-bottom-width: 2px;
}
.tool-group {
  display: flex;
  align-items: center;
}
.grip {
  width: 5px;
  height: 17px;
  margin: 0 3px 0 8px;
  background: radial-gradient(circle, #b5b5b5 1px, transparent 1px) 0 0 / 3px 3px;
}
.tool-group:first-child .grip {
  margin-left: 4px;
}
.tool {
  display: flex;
  align-items: center;
  box-sizing: border-box;
  width: 31px;
  height: 31px;
  margin: 1px 1px 0;
  padding: 0 2px;
  border: 1px solid transparent;
  border-radius: 3px;
}
.tool svg {
  width: 25px;
  height: 25px;
}
.tool.drop {
  width: 43px;
}
.tool:disabled svg {
  opacity: .28;
  filter: grayscale(.7);
}
.tool:disabled .caret {
  opacity: .5;
}
.tool.dark-drop:disabled .caret {
  opacity: .7;
}
.tool.raised {
  border-color: #b0b0b0;
  background: #fafafa;
}
.tool.pressed {
  border-color: #b0b0b0;
  background: #dcdcdc;
}
.caret {
  flex: none;
  margin-left: 6px;
  border: 4px solid transparent;
  border-top-color: #505050;
  border-bottom: 0;
}
.workspace {
  display: flex;
  flex: 1;
  min-height: 0;
}
.docks {
  display: flex;
  flex-direction: column;
  flex: none;
  width: 294px;
}
.dock {
  flex: none;
}
.browser {
  display: flex;
  flex: 1;
  flex-direction: column;
  min-height: 0;
}
.dock-title {
  display: flex;
  align-items: center;
  gap: 3px;
  height: 18px;
  padding: 0 2px 0 4px;
}
.dock-title h2 {
  flex: 1;
}
.dock-title svg {
  width: 11px;
  height: 11px;
}
.dock-tools {
  display: flex;
  align-items: center;
  gap: 9px;
  padding: 7px 0 8px 8px;
}
.layers .dock-tools {
  padding-bottom: 1px;
}
.dock-tools button {
  display: flex;
  align-items: center;
}
.dock-tools svg {
  width: 16px;
  height: 16px;
}
.dock-tools .caret {
  margin-left: 6px;
  margin-right: -2px;
}
.tree-frame {
  display: grid;
  grid-template: minmax(0, 1fr) 14px / minmax(0, 1fr) 14px;
  flex: 1;
  min-height: 0;
  border: 1px solid #b4b4b4;
  background: #fff;
}
.tree {
  margin: 0;
  padding: 1px 0 0;
  overflow: hidden;
  list-style: none;
}
.tree li {
  display: flex;
  align-items: center;
  height: 18px;
  white-space: nowrap;
}
.tree li:last-child {
  height: 17px;
}
.tree svg {
  width: 16px;
  height: 16px;
  margin: 0 6px 0 7px;
}
.level-0 { padding-left: 111px; }
.level-1 { padding-left: 131px; }
.level-2 { padding-left: 151px; }
.level-3 { padding-left: 171px; }
.arrow {
  display: flex;
  justify-content: center;
  width: 12px;
}
.arrow.closed::before {
  content: "";
  border: 4px solid transparent;
  border-left-color: #505050;
  border-right: 0;
}
.arrow.opened::before {
  content: "";
  border: 4px solid transparent;
  border-top-color: #505050;
  border-bottom: 0;
}
.vscroll, .hscroll {
  display: flex;
}
.vscroll {
  flex-direction: column;
  border-left: 1px solid #b4b4b4;
}
.hscroll {
  border-top: 1px solid #b4b4b4;
}
.vscroll button, .hscroll button {
  display: flex;
  align-items: center;
  justify-content: center;
  flex: none;
  width: 13px;
  height: 13px;
  background: #f9f9f9;
}
.vscroll button:first-child { border-bottom: 1px solid #b4b4b4; }
.vscroll button:last-child { border-top: 1px solid #b4b4b4; }
.hscroll button:first-child { border-right: 1px solid #b4b4b4; }
.hscroll button:last-child { border-left: 1px solid #b4b4b4; }
.vscroll i, .hscroll i {
  border: 4px solid transparent;
}
.vscroll .up { border-top-width: 0; border-bottom-color: #505050; }
.vscroll .down { border-bottom-width: 0; border-top-color: #505050; }
.hscroll .left { border-left-width: 0; border-right-color: #505050; }
.hscroll .right { border-right-width: 0; border-left-color: #505050; }
.groove {
  background: #e6e6e6;
}
.thumb {
  background: linear-gradient(#fefefe, #f4f4f4);
}
.vscroll .before { flex: 81; }
.vscroll .thumb {
  flex: 42;
  border: solid #b4b4b4;
  border-width: 1px 0;
}
.vscroll .after { flex: 97; }
.hscroll .groove { flex: 27; }
.hscroll .thumb {
  flex: 223;
  border-left: 1px solid #b4b4b4;
}
.corner {
  border: solid #b4b4b4;
  border-width: 1px 0 0 1px;
  background: #efefef;
}
.splitter {
  flex: none;
  align-self: center;
  width: 18px;
  height: 7px;
  background: radial-gradient(circle, #b5b5b5 1px, transparent 1px) 0 1px / 3px 3px repeat-x;
}
.side-splitter {
  display: flex;
  align-items: flex-end;
  flex: none;
  box-sizing: border-box;
  width: 7px;
  padding: 0 2px 66px;
  border-right: 1px solid #b4b4b4;
}
.side-splitter span {
  width: 3px;
  height: 18px;
  background: radial-gradient(circle, #b5b5b5 1px, transparent 1px) 0 0 / 3px 3px;
}
.canvas {
  flex: 1;
  min-width: 0;
  border-right: 1px solid #b4b4b4;
  background: #fff;
}
.canvas svg {
  width: 100%;
  height: 100%;
}
</style>
